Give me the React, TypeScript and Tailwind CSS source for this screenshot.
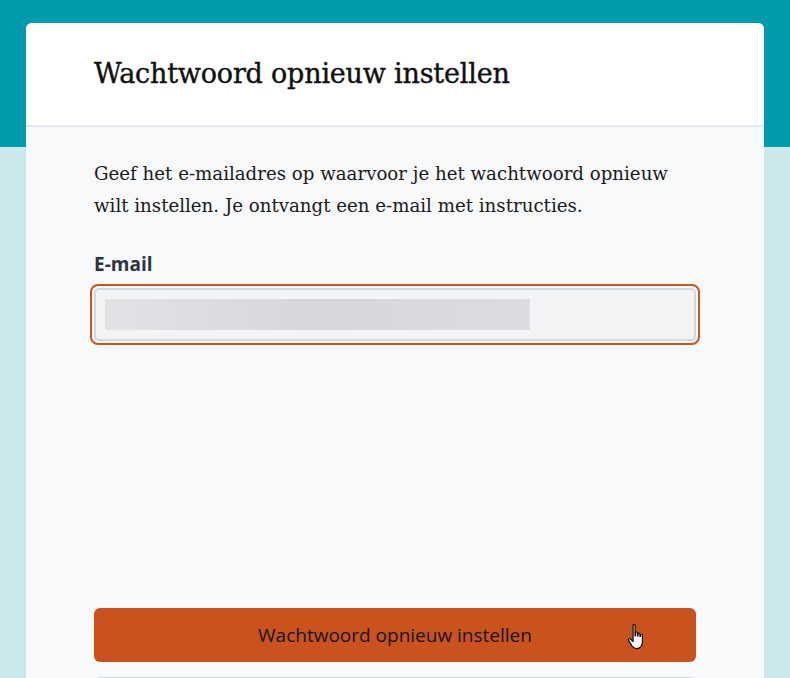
import React from "react";

export default function App() {
  return (
    <div className="relative min-h-[678px] w-full overflow-hidden bg-[#cbe9ec]">
      <div className="absolute inset-x-0 top-0 h-[147px] bg-[#009bad]" />
      <div className="relative px-[26px] pt-[23px]">
        <div className="w-[738px] overflow-hidden rounded-t-md bg-[#f8f9fb]">
          <div className="border-b-2 border-[#e5e8ee] bg-white px-[68px] pb-[33px] pt-[33px]">
            <h1 className="font-['DejaVu_Serif',serif] text-[27px] leading-[36px] tracking-[-0.2px] text-[#111] [-webkit-text-stroke:0.4px_#111]">
              Wachtwoord opnieuw instellen
            </h1>
          </div>
          <div className="px-[68px] pt-[31px] pb-10">
            <p className="font-['DejaVu_Serif',serif] text-[18.2px] leading-[32px] text-[#1a1a1a]">
              Geef het e-mailadres op waarvoor je het wachtwoord opnieuw wilt instellen. Je ontvangt een e-mail met instructies.
            </p>
            <label className="mt-[30px] block font-['Open_Sans',sans-serif] text-[19px] font-bold leading-[24px] text-[#2d3440]">
              E-mail
            </label>
            <div className="mt-[8px] -mx-1 rounded-[8px] border-2 border-[#cb531e] p-[2px]">
              <div className="flex h-[53px] items-center rounded-[5px] border-2 border-[#d3d7dd] bg-[#f3f4f6] px-[9px]">
                <div className="h-[31px] w-[425px] bg-gradient-to-r from-[#e2e3e5] via-[#d6d7da] to-[#dcdde0]" />
              </div>
            </div>
            <div className="h-[263px]" />
            <button className="relative flex h-[54px] w-full items-center justify-center rounded-[6px] bg-[#ca521c] font-['Open_Sans',sans-serif] text-[19px] text-[#161616]">
              Wachtwoord opnieuw instellen
              <svg className="absolute left-[533px] top-[14px]" width="22" height="30" viewBox="0 0 18 24">
                <path
                  d="M5 2.5c0-1 1.6-1 1.6 0V11h.4V8.5c0-1 1.6-1 1.6 0V11h.4V9.5c0-1 1.6-1 1.6 0V11.5h.4v-1c0-1 1.6-1 1.6 0V16c0 3-1.8 5.5-4.6 5.5H7.5c-1.5 0-2.6-.8-3.5-2.2L1.3 14.8c-.6-1 .7-2 1.5-1.2L5 15.8Z"
                  fill="#fff"
                  stroke="#111"
                  strokeWidth="1"
                  strokeLinejoin="round"
                />
              </svg>
            </button>
            <div className="mt-[15px] h-[54px] w-full rounded-[6px] border-2 border-[#d3d7dd]" />
          </div>
        </div>
      </div>
    </div>
  );
}
